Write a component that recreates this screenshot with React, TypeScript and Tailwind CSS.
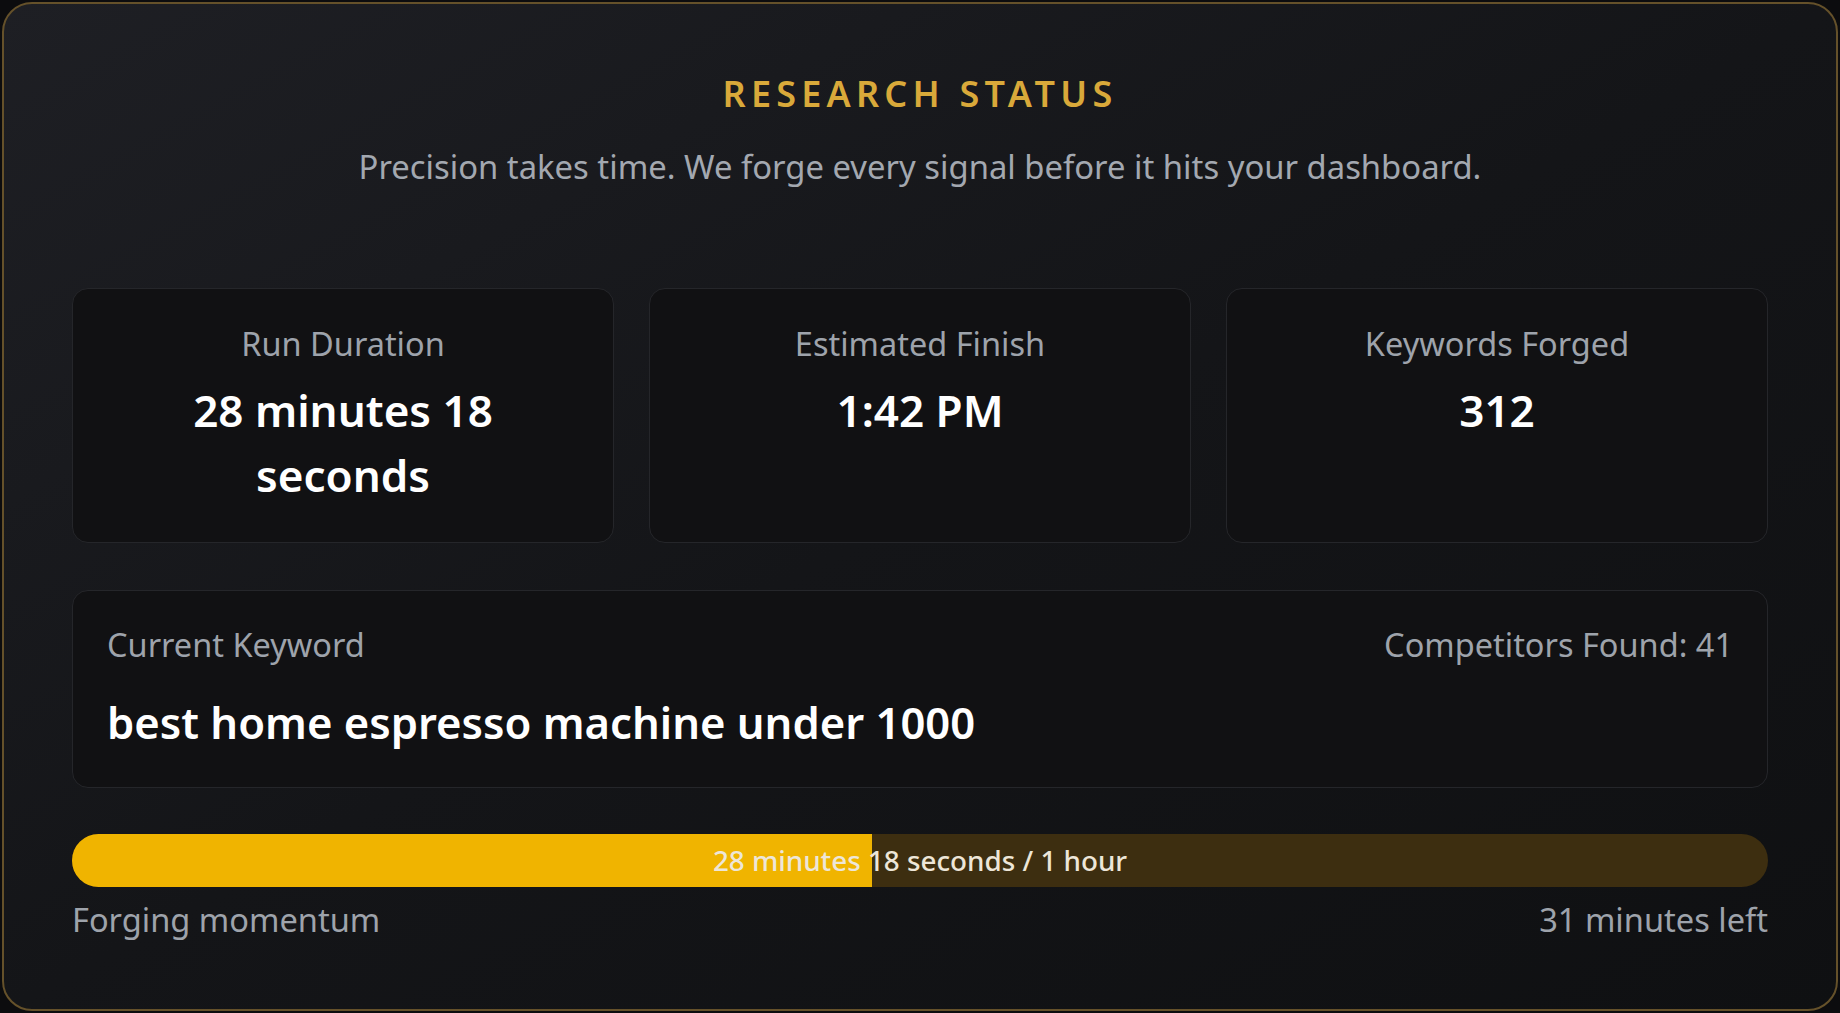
const stats = [
  { label: 'Run Duration', value: '28 minutes 18 seconds' },
  { label: 'Estimated Finish', value: '1:42 PM' },
  { label: 'Keywords Forged', value: '312' },
];

const elapsed = 28 * 60 + 18;
const total = 60 * 60;

export default function App() {
  const pct = (elapsed / total) * 100;

  return (
    <div className="h-screen w-full bg-[#0c0c0e] p-[2px] font-['Noto_Sans',sans-serif]">
      <div className="h-full w-full rounded-[30px] border-2 border-[#65512a] bg-gradient-to-br from-[#1e1f24] via-[#141518] to-[#0f1012] px-[68px] pt-[68px]">
        {/* Header */}
        <div className="text-center">
          <h1 className="text-[36px] leading-[44px] font-semibold tracking-[0.145em] text-[#d9a93a]">
            RESEARCH STATUS
          </h1>
          <p className="mt-[31px] text-[32.8px] leading-[40px] text-[#a3a8b0]">
            Precision takes time. We forge every signal before it hits your dashboard.
          </p>
        </div>

        {/* Stats */}
        <div className="mt-[101px] grid grid-cols-3 gap-[35px]">
          {stats.map((s) => (
            <div
              key={s.label}
              className="rounded-[16px] border border-[#25262a] bg-[#111113] px-8 pt-[35px] pb-[34px] text-center"
            >
              <div className="text-[32.5px] leading-[40px] text-[#9ea3ab]">{s.label}</div>
              <div className="mt-[14px] px-6 text-[44px] leading-[65px] font-semibold text-white">
                {s.value}
              </div>
            </div>
          ))}
        </div>

        {/* Current keyword */}
        <div className="mt-[47px] rounded-[16px] border border-[#25262a] bg-[#111113] px-[34px] pt-[34px] pb-[33px]">
          <div className="flex items-center justify-between text-[32.5px] leading-[40px] text-[#9ea3ab]">
            <span>Current Keyword</span>
            <span>Competitors Found: 41</span>
          </div>
          <div className="mt-[26px] text-[43.6px] leading-[63px] font-semibold text-white">
            best home espresso machine under 1000
          </div>
        </div>

        {/* Progress */}
        <div className="relative mt-[46px] h-[53px] w-full overflow-hidden rounded-full bg-[#3d2e10]">
          <div className="h-full bg-[#f0b400]" style={{ width: `${pct}%` }} />
          <div className="absolute inset-0 flex items-center justify-center text-[27.8px] font-medium text-[#ede6d8]">
            28 minutes 18 seconds / 1 hour
          </div>
        </div>
        <div className="mt-[13px] flex items-center justify-between text-[32.6px] leading-[40px] text-[#9ea3ab]">
          <span>Forging momentum</span>
          <span>31 minutes left</span>
        </div>
      </div>
    </div>
  );
}
